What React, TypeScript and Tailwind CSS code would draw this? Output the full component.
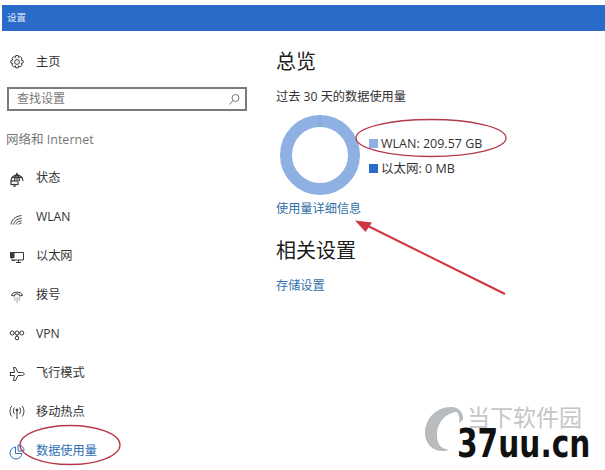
import React from 'react';

const cjk = 'font-["Open_Sans","Noto_Sans_CJK_SC",sans-serif]';

const iconProps = {
  width: 16,
  height: 16,
  viewBox: '0 0 16 16',
  fill: 'none',
  stroke: '#3a3a3a',
  strokeWidth: 1,
};

const GearIcon = () => (
  <svg {...iconProps}>
    <circle cx="8" cy="8" r="2.4" />
    <path d="M6.8 1.5h2.4l.4 2 1.7-.9 1.800 1.700-1 1.700 2 .5v2.400l-2 .5 1 1.700-1.800 1.700-1.700-.9-.4 2H6.800l-.4-2-1.700.9-1.800-1.700 1-1.700-2-.5V6.500l2-.5-1-1.700 1.800-1.700 1.700.9z" />
  </svg>
);

const GlobeIcon = () => (
  <svg {...iconProps} strokeWidth={1.2}>
    <path d="M2 10a6 6 0 1 1 12 0" />
    <path d="M8 2.500v7M5.500 10c0-3 .8-5.500 2.500-7.500 1.700 2 2.500 4.500 2.500 7.500M2.500 6.500h11" />
    <rect x="2" y="10" width="7" height="3.500" />
    <path d="M4 15h3" />
  </svg>
);

const WifiIcon = () => (
  <svg {...iconProps}>
    <path d="M2 14.500C2.500 9.500 6 6.500 12.500 5.500M4.500 14.500C5 11.500 7.500 9 12.500 8.300M7 14.500c.3-1.800 2-3.300 5.500-3.600M9.500 14.500c.3-.8 1.300-1.200 3-1.300" />
  </svg>
);

const EthernetIcon = () => (
  <svg {...iconProps}>
    <path d="M4 3.500h10.500v7.500H4" />
    <path d="M7 13.500h5M9.500 11v2.500" />
    <rect x="1.500" y="3.500" width="3.500" height="5" fill="#3a3a3a" />
    <path d="M3 8.500v3h3" />
  </svg>
);

const DialIcon = () => (
  <svg {...iconProps}>
    <path d="M2.500 7.500C3 3 13 3 13.500 7.500l-3 .5-.3-1.700c-1.500-.5-2.900-.5-4.400 0L5.500 8z" />
    <path d="M5.500 10h.9M7.600 10h.9M9.700 10h.9M5.500 12h.9M7.600 12h.9M9.700 12h.9M7.600 14h.9" />
  </svg>
);

const VpnIcon = () => (
  <svg {...iconProps}>
    <circle cx="3.200" cy="6" r="2" />
    <circle cx="8" cy="6" r="2" />
    <circle cx="12.800" cy="6" r="2" />
    <circle cx="8" cy="11" r="1.800" />
    <path d="M5.200 6h.8M10 6h.8M8 8v1.200" />
  </svg>
);

const PlaneIcon = () => (
  <svg {...iconProps}>
    <path d="M1 6.500h4.500L4.500 1.500h2L9 6.500h3.500c2 0 2.800 1 2.800 1.500s-.8 1.500-2.800 1.500H9l-2.500 5h-2l1-5H1l.8-1.500z" />
  </svg>
);

const HotspotIcon = () => (
  <svg {...iconProps}>
    <path d="M8 6v8" />
    <circle cx="8" cy="5" r="1" fill="#3a3a3a" />
    <path d="M5.500 2.500c-1.500 2-1.500 4.500 0 6.500M10.500 2.500c1.500 2 1.500 4.500 0 6.500M2.800 1c-2.300 3-2.300 7.500 0 10.500M13.200 1c2.300 3 2.300 7.500 0 10.500" />
  </svg>
);

const UsageIcon = () => (
  <svg {...iconProps} stroke="#2f6fb5">
    <path d="M6.500 3a6 6 0 1 0 6.500 6.500H6.500z" />
    <path d="M9 1a5.500 5.500 0 0 1 6 6H9z" />
  </svg>
);

const navItems: { label: string; icon: React.ReactNode; active?: boolean }[] = [
  { label: '状态', icon: <GlobeIcon /> },
  { label: 'WLAN', icon: <WifiIcon /> },
  { label: '以太网', icon: <EthernetIcon /> },
  { label: '拨号', icon: <DialIcon /> },
  { label: 'VPN', icon: <VpnIcon /> },
  { label: '飞行模式', icon: <PlaneIcon /> },
  { label: '移动热点', icon: <HotspotIcon /> },
  { label: '数据使用量', icon: <UsageIcon />, active: true },
];

const NavRow = ({ label, icon, active }: { label: string; icon: React.ReactNode; active?: boolean }) => (
  <div className={`flex h-[39px] items-center pl-[9px] text-[12.2px] ${active ? 'text-[#2f6fb5]' : 'text-[#333333]'}`}>
    <span className="flex w-[27px] shrink-0 items-center">{icon}</span>
    <span>{label}</span>
  </div>
);

const Annotations = () => (
  <svg className="absolute inset-0" width="605" height="470" viewBox="0 0 605 470" fill="none">
    <ellipse cx="431" cy="138" rx="75" ry="18.500" stroke="#b5394a" strokeWidth="1.300" />
    <ellipse cx="70" cy="445" rx="50" ry="19.500" stroke="#b5394a" strokeWidth="1.300" />
    <path d="M505 294L366 225" stroke="#cf3540" strokeWidth="2" />
    <path d="M355 220.500L372 222.500L365.500 232z" fill="#cf3540" />
  </svg>
);

const Watermark = () => (
  <div className="absolute left-[420px] top-[400px] h-[64px] w-[180px]">
    <svg className="absolute left-[4px] top-[6px]" width="40" height="46" viewBox="0 0 40 46">
      <path
        d="M27 1C12 1 1 13 1 27c0 11 8 18 17 18 3 0 5-.5 7-1.500-7 0-12-5-12-14C13 17 21 7 33 6c2 3 3 7 2 11l4-3C40 7 35 1 27 1z"
        fill="#b9bcbe"
      />
    </svg>
    <span className={`absolute left-[47px] top-[2px] text-[23px] leading-[30px] whitespace-nowrap text-[#c4c6c8] ${cjk}`}>
      当下软件园
    </span>
    <span className='absolute left-[37px] top-[22px] origin-left scale-x-[0.76] whitespace-nowrap font-["DejaVu_Sans",sans-serif] text-[39px] font-bold leading-[44px] text-[#111111]'>
      37uu.cn
    </span>
  </div>
);

export default function App() {
  return (
    <div className={`relative h-[470px] w-[605px] overflow-hidden bg-white ${cjk}`}>
      <div className="pl-[2px] pt-[5px]">
        <div className="flex h-[26px] items-center bg-[#2a6bc9] pl-[5px] text-[9.5px] text-[#dce8f7]">设置</div>
      </div>
      <div className="flex">
        <aside className="w-[260px] shrink-0">
          <div className="flex h-[56px] items-start pl-[9px] pt-[21px] text-[12.2px] text-[#333333]">
            <span className="flex h-[20px] w-[27px] items-center"><GearIcon /></span>
            <span className="leading-[20px]">主页</span>
          </div>
          <div className="ml-[7px] flex h-[24px] w-[240px] items-center justify-between border-2 border-[#7b7b7b] pl-[8px] pr-[4px] text-[12px] text-[#777777]">
            <span>查找设置</span>
            <svg width="13" height="13" viewBox="0 0 13 13" fill="none" stroke="#777777">
              <circle cx="7.500" cy="5" r="3.500" />
              <path d="M5 7.500L1.500 11.500" />
            </svg>
          </div>
          <div className="mt-[19px] h-[20px] pl-[6px] text-[12.5px] leading-[20px] text-[#777777]">网络和 Internet</div>
          <div className="mt-[9px]">
            {navItems.map(item => (
              <NavRow key={item.label} {...item} />
            ))}
          </div>
        </aside>
        <main className="pl-[16px]">
          <h1 className="mt-[16px] text-[20px] leading-[30px] text-[#1c1c1c]">总览</h1>
          <p className="mt-[10px] text-[12.2px] leading-[20px] text-[#333333]">过去 30 天的数据使用量</p>
          <div className="mt-[6px] flex items-center">
            <svg width="84" height="84" viewBox="0 0 84 84" className="ml-[2px] shrink-0">
              <circle cx="42" cy="42" r="34" fill="none" stroke="#8fb0e3" strokeWidth="12" />
              <path d="M42 2v12" stroke="#7f9fd2" strokeWidth="0.800" />
            </svg>
            <div className="ml-[7px] flex flex-col gap-[7px] pt-[2px] text-[12.5px] leading-[18px] text-[#333333]">
              <div className="flex items-center gap-[3px]">
                <span className="h-[9px] w-[9px] bg-[#8fb0e3]" />
                <span>WLAN: 209.57 GB</span>
              </div>
              <div className="flex items-center gap-[3px]">
                <span className="h-[9px] w-[9px] bg-[#2a6bc9]" />
                <span>以太网: 0 MB</span>
              </div>
            </div>
          </div>
          <a className="mt-[3px] block text-[12.2px] leading-[18px] text-[#2f6fa8]">使用量详细信息</a>
          <h2 className="mt-[18px] text-[20px] leading-[30px] text-[#1c1c1c]">相关设置</h2>
          <a className="mt-[11px] block text-[12.2px] leading-[18px] text-[#2f6fa8]">存储设置</a>
        </main>
      </div>
      <Annotations />
      <Watermark />
    </div>
  );
}
